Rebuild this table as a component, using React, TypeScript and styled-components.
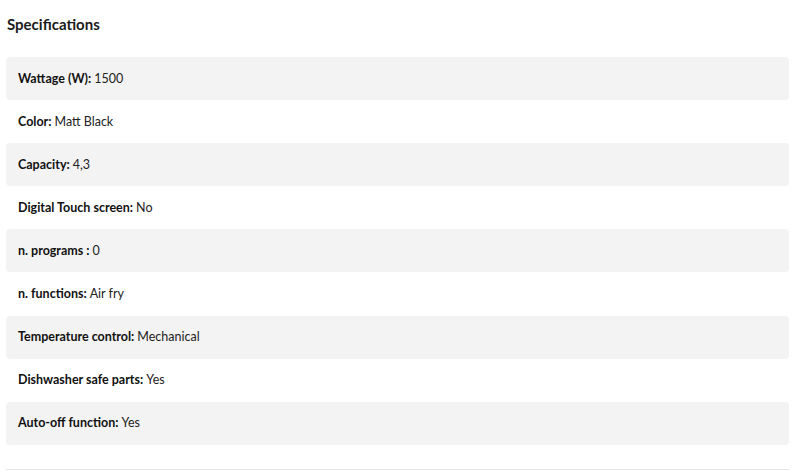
import React, { FC } from "react";
import styled, { createGlobalStyle } from "styled-components";

const specs: [string, string][] = [
  ["Wattage (W):", "1500"],
  ["Color:", "Matt Black"],
  ["Capacity:", "4,3"],
  ["Digital Touch screen:", "No"],
  ["n. programs :", "0"],
  ["n. functions:", "Air fry"],
  ["Temperature control:", "Mechanical"],
  ["Dishwasher safe parts:", "Yes"],
  ["Auto-off function:", "Yes"],
];

const App: FC = () => (
  <>
    <GlobalStyle />
    <Section>
      <Title>Specifications</Title>
      <List>
        {specs.map(([label, value], i) => (
          <Row key={label} shaded={i % 2 === 0}>
            <Label>{label}</Label> {value}
          </Row>
        ))}
      </List>
      <Divider />
    </Section>
  </>
);

const GlobalStyle = createGlobalStyle`
  * {
    box-sizing: border-box;
  }
  body {
    margin: 0;
    background: #fff;
    font-family: Lato, "Noto Sans", sans-serif;
    color: #1b1b1b;
  }
`;

const Section = styled.section`
  padding: 0 11px 0 6px;
`;

const Title = styled.h2`
  margin: 0;
  padding: 14px 0 0 1px;
  height: 57px;
  font-size: 15px;
  font-weight: 700;
  line-height: 20px;
`;

const List = styled.div`
  display: flex;
  flex-direction: column;
`;

const Row = styled.div.withConfig({
  shouldForwardProp: (p) => p !== "shaded",
})<{ shaded: boolean }>`
  display: flex;
  align-items: center;
  gap: 3px;
  height: 43.1px;
  padding: 0 0 1px 12px;
  border-radius: 4px;
  background: ${(p) => (p.shaded ? "#f3f3f3" : "transparent")};
  font-size: 12.5px;
  color: #222;
`;

const Label = styled.span`
  font-weight: 700;
  color: #111;
`;

const Divider = styled.hr`
  margin: 24px 0 0;
  border: none;
  border-top: 1px solid #e6e6e6;
`;

export default App;
